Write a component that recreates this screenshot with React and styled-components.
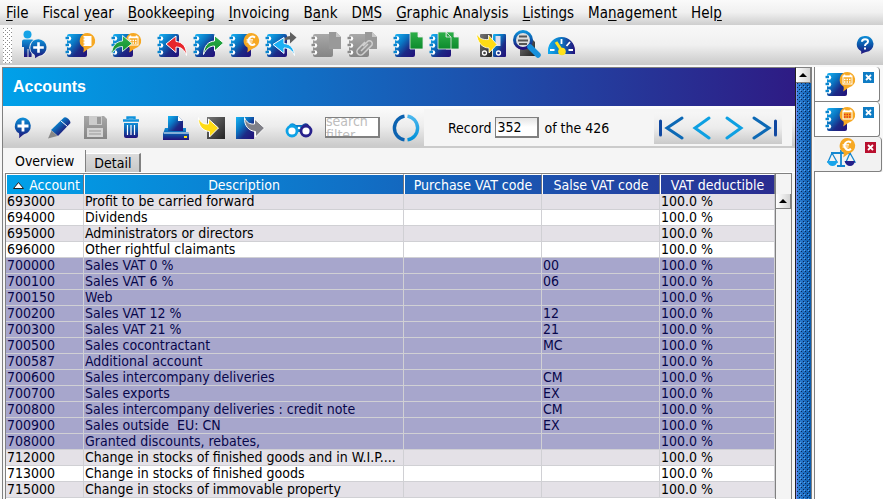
import React, { useState } from 'react'
import styled, { createGlobalStyle } from 'styled-components'

const GlobalStyle = createGlobalStyle`
    * {
        box-sizing: border-box;
    }
    body {
        margin: 0;
        background: #fff;
    }
    button, input, textarea {
        font: inherit;
        color: inherit;
    }
    svg {
        display: block;
        flex: none;
    }
`;

const Page = styled.div`
    height: 100vh;
    overflow: hidden;
    display: flex;
    flex-direction: column;
    background: #f8f8f8;
    color: #000;
    font-family: "DejaVu Sans Condensed", Verdana, sans-serif;
    font-size: 14px;
`;

const Defs = styled.svg`
    position: absolute;
`;

const PlainButton = styled.button`
    border: 0;
    padding: 0;
    background: none;
    display: flex;
    align-items: center;
    justify-content: center;
    cursor: pointer;
`;

/* ---------- menu and main toolbar ---------- */

const MenuBar = styled.nav`
    flex: none;
    height: 25px;
    display: flex;
    align-items: center;
    gap: 14px;
    padding: 1px 6px 0;
    background: linear-gradient(#fafafa, #f0f0f0 50%, #cecece);
`;

const MenuItem = styled(PlainButton)`
    display: block;
    font-size: 15px;
    line-height: 20px;
    white-space: nowrap;
    u {
        text-underline-offset: 2px;
    }
`;

const ToolBar = styled.div`
    flex: none;
    height: 40px;
    display: flex;
    align-items: center;
    gap: 10px;
    padding: 0 9px 0 3px;
    background: linear-gradient(#f8f8f8, #f0f0f0 50%, #c9c9c9);
`;

const Grip = styled.div`
    width: 9px;
    height: 35px;
    margin-right: -5px;
    background:
        linear-gradient(#8a8a8a, #8a8a8a) 0 0 / 0 0,
        conic-gradient(from 270deg at 1px 1px, #8a8a8a 25%, transparent 0) 0 0 / 4px 4px,
        conic-gradient(from 270deg at 1px 1px, #8a8a8a 25%, transparent 0) 2px 2px / 4px 4px,
        #fff;
`;

const Group = styled.div`
    display: flex;
    align-items: center;
`;

const IconButton = styled(PlainButton)`
    width: 36px;
    height: 36px;
`;

const HelpButton = styled(PlainButton)`
    margin-left: auto;
`;

/* ---------- frame ---------- */

const Workspace = styled.div`
    flex: 1;
    min-height: 0;
    display: flex;
    padding: 2px 0 0 2px;
`;

const Panel = styled.main`
    flex: 1;
    min-width: 0;
    display: flex;
    flex-direction: column;
    border: solid #808080;
    border-width: 1px 0 0 1px;
    background: #f5f5f5;
`;

const TitleBar = styled.h1`
    flex: none;
    margin: 0;
    padding: 0 10px;
    font: bold 16px/38px "Liberation Sans", Arial, sans-serif;
    color: #fff;
    background: linear-gradient(to right, #00a1e9, #116fc5 38%, #2340a0 72%, #2e1b84);
`;

const PanelBar = styled.div`
    flex: none;
    height: 42px;
    display: flex;
    align-items: center;
    gap: 10px;
    padding: 3px 3px 0 2px;
    border-bottom: 2px solid #cbcbcb;
    background: linear-gradient(#fcfcfc, #ededed 50%, #cbcbcb);
`;

const SearchGroup = styled(Group)`
    gap: 8px;
    padding-left: 4px;
`;

const SearchBox = styled.label`
    width: 55px;
    height: 21px;
    overflow: hidden;
    border: 1px solid #808080;
    border-width: 1px 2px 2px 1px;
    background: #fff;
`;

const SearchText = styled.textarea`
    display: block;
    width: 100%;
    height: 32px;
    margin-top: -4px;
    padding: 0;
    border: 0;
    outline: none;
    resize: none;
    overflow: hidden;
    background: none;
    line-height: 14px;
    &::placeholder {
        color: #bdbdbd;
    }
`;

const RecordPanel = styled.div`
    flex: 1;
    align-self: stretch;
    display: flex;
    align-items: center;
    gap: 5px;
    margin-left: -10px;
    padding: 0 10px 0 24px;
    background: #f5f5f5;
    white-space: nowrap;
`;

const RecordLabel = styled.label`
    display: flex;
    align-items: center;
    gap: 4px;
`;

const RecordInput = styled.input`
    width: 44px;
    height: 21px;
    padding: 0 1px;
    border: 1px solid #808080;
    border-width: 1px 2px 2px 1px;
    border-radius: 0;
    outline: none;
    background: linear-gradient(#e4e4e4, #fff 50%);
`;

const Navigator = styled.div`
    display: flex;
    margin-left: auto;
    background: linear-gradient(#f6f6f6, #ececec 50%, #cacaca);
`;

const NavButton = styled(PlainButton)`
    width: 32px;
    height: 32px;
`;

/* ---------- tabs ---------- */

const Tabs = styled.div`
    flex: none;
    height: 25px;
    display: flex;
    align-items: flex-end;
    padding: 0 1px;
    border-bottom: 1px solid #fff;
`;

const Tab = styled(PlainButton)`
    height: ${props => props.$active ? "22px" : "19px"};
    padding: 0 ${props => props.$active ? "11px" : "8px"};
    background: ${props => props.$active ? "#f7f7f7" : "linear-gradient(#dcdcdc, #c8c8c8)"};
    border: solid #808080;
    border-width: ${props => props.$active ? "0 1px 0 0" : "1px 2px 0 0"};
    border-top-color: #fff;
`;

/* ---------- table ---------- */

const TableFrame = styled.div`
    flex: 1;
    min-height: 0;
    display: grid;
    grid-template-columns: 1fr 16px;
    margin: 0 3px 0 2px;
    border: solid #808080;
    border-width: 1px 1px 0;
    background: #fff;
`;

const AccountTable = styled.table`
    width: 100%;
    align-self: start;
    table-layout: fixed;
    border-collapse: separate;
    border-spacing: 0;
`;

const HeadRow = styled.tr`
    background: linear-gradient(to right, #00a1e9, #116fc5 46%, #2340a0 84%, #2a2c90);
`;

const HeadCell = styled.th`
    height: 20px;
    padding: 0 3px;
    font-weight: normal;
    line-height: 18px;
    white-space: nowrap;
    color: #fff;
    text-align: ${props => props.$align || "center"};
    border-top: 1px solid #fff;
    border-right: 1px solid #6f7480;
    border-left: 1px solid #fff;
`;

const SortMark = styled.svg`
    display: inline-block;
    margin-right: 5px;
    vertical-align: 1px;
`;

const Row = styled.tr`
    background: ${props => props.$selected ? "#a7a6cc" : props.$shaded ? "#e4e1e7" : "#fff"};
    color: ${props => props.$selected ? "#07074a" : "#000"};
`;

const Cell = styled.td`
    height: 16px;
    padding: 0 1px;
    line-height: 15px;
    white-space: pre;
    overflow: hidden;
    border-right: 1px solid #d0d0d4;
    border-bottom: 1px solid #d0d0d4;
`;

const TableScroll = styled.div`
    padding-top: 20px;
    border-left: 1px solid #808080;
    background: #f4f4f4;
`;

const ArrowButton = styled(PlainButton)`
    width: 100%;
    height: 15px;
    border: solid #808080;
    border-width: 0 1px 1px 0;
    background: linear-gradient(to right, #fff, #d4d4d4);
`;

/* ---------- outer scroll and side tabs ---------- */

const PanelScroll = styled.div`
    flex: none;
    width: 17px;
    display: flex;
    flex-direction: column;
    border: solid #808080;
    border-width: 1px 1px 0 1px;
    border-left-color: #222;
`;

const Thumb = styled.div`
    flex: 1;
    border-left: 1px solid #7c8cf0;
    background:
        conic-gradient(from 270deg at 1px 1px, #0a2450 25%, transparent 0) 0 0 / 4px 4px,
        conic-gradient(from 270deg at 1px 1px, #0a2450 25%, transparent 0) 2px 2px / 4px 4px,
        conic-gradient(from 270deg at 1px 1px, #5aa4ea 25%, transparent 0) 3px 3px / 4px 4px,
        linear-gradient(to right, #3482d8, #0a5cae);
`;

const Side = styled.aside`
    flex: none;
    width: 71px;
    display: flex;
    flex-direction: column;
    padding-left: 2px;
`;

const SideTab = styled.div`
    flex: none;
    height: 35px;
    display: flex;
    align-items: flex-start;
    gap: 6px;
    margin-right: ${props => props.$active ? "1px" : "3px"};
    padding: 1px 0 0 ${props => props.$active ? "13px" : "10px"};
    border: solid #808080;
    border-width: ${props => props.$active ? "0 1px 1px 0" : "0 1px 1px 1px"};
    border-radius: 0 4px 3px 0;
    background: ${props => props.$active ? "#f2f2f2" : "#fff"};
`;

const CloseButton = styled(PlainButton)`
    width: 11px;
    height: 11px;
    margin-top: 4px;
    background: ${props => props.$red ? "#b80f2e" : "#0f7cc4"};
`;

const SideBody = styled.div`
    flex: 1;
    border-left: 1px solid #808080;
    background: #fff;
`;

/* ---------- icons ---------- */

const Svg = ({ size = 32, children }) => (
    <svg width={size} height={size} viewBox={`0 0 ${size} ${size}`} aria-hidden="true">{children}</svg>
)

const Gradients = () => (
    <Defs width="0" height="0" aria-hidden="true">
        <defs>
            <linearGradient id="book" x1="0" y1="0" x2="1" y2="1">
                <stop offset="0" stopColor="#18b4f4" />
                <stop offset="0.35" stopColor="#0a78c4" />
                <stop offset="0.65" stopColor="#1c2a86" />
                <stop offset="1" stopColor="#24107a" />
            </linearGradient>
            <linearGradient id="down" x1="0" y1="0" x2="0" y2="1">
                <stop offset="0" stopColor="#0f8fd8" />
                <stop offset="0.5" stopColor="#0c55a8" />
                <stop offset="1" stopColor="#24107a" />
            </linearGradient>
            <linearGradient id="sky" x1="0" y1="0" x2="0" y2="1">
                <stop offset="0" stopColor="#4cb8ee" />
                <stop offset="1" stopColor="#0090d8" />
            </linearGradient>
            <linearGradient id="across" x1="0" y1="0" x2="1" y2="0">
                <stop offset="0" stopColor="#12aaf0" />
                <stop offset="0.5" stopColor="#0b74c0" />
                <stop offset="1" stopColor="#24107a" />
            </linearGradient>
            <linearGradient id="grey" x1="0" y1="0" x2="0" y2="1">
                <stop offset="0" stopColor="#a8a8a8" />
                <stop offset="1" stopColor="#858585" />
            </linearGradient>
            <linearGradient id="green" x1="0" y1="0" x2="0" y2="1">
                <stop offset="0" stopColor="#2fb04a" />
                <stop offset="1" stopColor="#0c8a2c" />
            </linearGradient>
            <linearGradient id="dark" x1="0" y1="0" x2="1" y2="1">
                <stop offset="0" stopColor="#777" />
                <stop offset="1" stopColor="#222" />
            </linearGradient>
        </defs>
    </Defs>
)

const Book = ({ fill = "url(#book)" }) => (
    <g>
        <rect x="2" y="5" width="20" height="23" rx="2" fill={fill} />
        {[9.5, 16.5, 23.5].map(y => (
            <g key={y}>
                <circle cx="4" cy={y} r="2.2" fill="#fff" />
                <path d={`M0.5 ${y - 0.5}h3.5`} stroke={fill === "url(#book)" ? "#0a86cf" : "#8c8c8c"} strokeWidth="2.4" />
            </g>
        ))}
    </g>
)

const Bubble = () => (
    <path d="M22.500 4a7.800 7.800 0 0 1 2 15.300C22.500 20 21 22 18 23.500c1-2 .800-3.500.500-5A7.800 7.800 0 0 1 22.500 4z" fill="#f6a823" />
)

const Calendar = ({ color = "#fff" }) => (
    <g>
        <rect x="18" y="8" width="9" height="8" fill="none" stroke="#fff" />
        <path d="M18 8.500h9M19.500 6.500v2M25.500 6.500v2" stroke="#fff" strokeWidth="1.500" />
        <path d="M19 11.500h7M19 14h7" stroke={color} strokeWidth="1.500" strokeDasharray="1.500 1" />
    </g>
)

const Euro = () => (
    <g fill="none" stroke="#fff" strokeWidth="2">
        <path d="M26 8.600a4 4 0 1 0 0 6.300" />
        <path d="M17.500 10.800h6.500M17.500 13h6" strokeWidth="1.200" />
    </g>
)

const arrowRight = "M10.500 25.500C11 17 15 12.500 21.500 12V6.500l9 7.500-9 8v-5c-5 0-8.500 3-11 8.500z"
const arrowLeft = "M29.500 26.500C29.500 18 26 13 19 12.500V7L9 15l10 8.500V18c5.500 0 8.500 3 10.500 8.500z"

const PersonIcon = () => (
    <Svg>
        <g transform="translate(2 0)">
            <circle cx="6.500" cy="5.500" r="4" fill="#16a3e6" />
            <path d="M1 12.500q0-2 2-2h8q2 0 2 2v6h-2l-.5 9.500H7.500V20H6.500v8H3V18H1z" fill="url(#down)" />
            <circle cx="17.500" cy="18.500" r="9.200" fill="#eee" />
            <path d="M17.500 10.200a8.300 8.300 0 0 1 1 16.500q-2 .500-4.500 2.500.500-2-.500-3.500A8.300 8.300 0 0 1 17.500 10.200z" fill="url(#down)" />
            <path d="M17.500 13.200v10.600M12.200 18.500h10.600" stroke="#fff" strokeWidth="2.600" />
        </g>
    </Svg>
)
const BookNoteIcon = () => (
    <Svg><Book /><Bubble /><path d="M18.500 7h8v10h-8z" fill="#fff" /><path d="M17.500 9h2M17.500 12h2M17.500 15h2" stroke="#f6a823" /></Svg>
)
const BookImportIcon = () => (
    <Svg>
        <Book /><Bubble /><Calendar />
        <path d="M0.500 25.500C1 17 5 12.500 11.500 12V6.500l9.500 8-9.500 8v-5c-5 0-8 2.500-11 8z" fill="url(#green)" stroke="#fff" strokeWidth=".800" />
    </Svg>
)
const BookArrowIcon = ({ left, fill }) => (
    <Svg><Book /><path d={left ? arrowLeft : arrowRight} fill={fill} stroke="#fff" /></Svg>
)
const BookEuroIcon = () => <Svg><Book /><Bubble /><Euro /></Svg>
const BookSwapIcon = () => (
    <Svg>
        <Book />
        <path d="M17 15c1-5 4-8 8-8V3l6.500 5.500-6.500 6v-4c-4 0-6 1-8 4.500z" fill="#606060" />
        <path d="M29.500 26.500C29 19 25.500 15 19 14.500V8.500L8 15.500 19 24.500V19c5 0 8.500 2.500 10.500 7.500z" fill="#1cb0f4" stroke="#fff" />
    </Svg>
)
const PagePath = ({ x = 0, fill }) => (
    <path transform={`translate(${x} 0)`} d="M17 3h8l5 5v12H17z M25 3v5h5" fill={fill} stroke="#e8e8e8" strokeWidth=".800" />
)
const GreyPageIcon = () => (
    <Svg><Book fill="url(#grey)" /><path d="M18 3h7l5 5v12H18z" fill="#999" /><path d="M25 3v5h5" fill="#c8c8c8" /></Svg>
)
const GreyClipIcon = () => (
    <Svg>
        <Book fill="url(#grey)" /><path d="M18 3h7l5 5v12H18z" fill="#999" />
        <path d="M25 3v5h5" fill="#c8c8c8" />
        <path d="M16 17l5-5a3 3 0 0 1 4 4l-9 9a3.500 3.500 0 0 1-5-5l7-7M14 22l7-7" fill="none" stroke="#d0d0d0" strokeWidth="1.500" />
    </Svg>
)
const GreenPageIcon = () => <Svg><Book /><PagePath fill="url(#green)" /></Svg>
const GreenPagesIcon = () => (
    <Svg><Book /><PagePath fill="url(#green)" /><PagePath x={-8} fill="url(#green)" /></Svg>
)
const BinderIcon = () => (
    <Svg>
        <rect x="5" y="5" width="12" height="23" rx="1" fill="url(#dark)" />
        <rect x="18" y="5" width="13" height="23" rx="1" fill="url(#book)" />
        <path d="M20.500 7h5v10h-5z" fill="#dde" />
        <g fill="none" stroke="#fff" strokeWidth="1.300"><circle cx="9.500" cy="24" r="2" /><circle cx="23.500" cy="24" r="2" /></g>
        <path d="M1.500 4.500c3 5 6 6.500 12 6V6l8.500 9.500-8 8.500v-5C7 19 2 13 1.500 4.500z" fill="#ffdc14" stroke="#fff" strokeWidth=".800" />
    </Svg>
)
const ZoomIcon = () => (
    <Svg>
        <path d="M9 9h11l4 4v14H9z" fill="url(#dark)" />
        <circle cx="12" cy="11" r="8.500" fill="#ddd" stroke="url(#down)" strokeWidth="3" />
        <path d="M8 7.500h8M7 11.500h10M8 15h8" stroke="#555" strokeWidth="2" />
        <path d="M19 18l8 8" stroke="#1690dc" strokeWidth="5.500" strokeLinecap="round" />
    </Svg>
)
const GaugeIcon = () => (
    <Svg>
        <path d="M1 25v-3.500a13.500 13.500 0 0 1 27 0V25z" fill="url(#across)" />
        <path d="M14.500 10v5M23 13l-3.500 4M3 21h4.500M21.500 21H26" stroke="#fff" strokeWidth="1.800" />
        <path d="M9 13l6 9" stroke="#ffe11a" strokeWidth="3" />
        <circle cx="15" cy="22.500" r="3.800" fill="#ffe11a" />
    </Svg>
)
const HelpIcon = () => (
    <Svg size={18}>
        <path d="M9 0a8 8 0 0 1 1 16q-2 .500-5 2 .500-1.500 0-3A8 8 0 0 1 9 0z" fill="url(#down)" />
        <path d="M6 5.800q0-2.500 3-2.500t3 2.200q0 1.500-1.500 2.200T9 10" fill="none" stroke="#fff" strokeWidth="2" />
        <path d="M8 11.500h2v2H8z" fill="#fff" />
    </Svg>
)

const AddIcon = () => (
    <Svg>
        <path d="M16 5.500a8.500 8.500 0 0 1 1 16.800q-1 .500-5 4 .500-3 0-5A8.500 8.500 0 0 1 16 5.500z" fill="url(#down)" />
        <path d="M16 8.500v11M10.500 14h11" stroke="#fff" strokeWidth="2.800" />
    </Svg>
)
const PencilIcon = () => (
    <Svg>
        <path d="M21 5.500q2-1 4.500 1.500t2 4L15 24l-7-6z" fill="url(#book)" />
        <path d="M18 9l6.500 5.500" stroke="#fff" strokeWidth="1" />
        <path d="M8.500 18.500l6 5.500-9.500 2.500z" fill="#888" />
    </Svg>
)
const SaveIcon = () => (
    <Svg>
        <path d="M5 4h20l3 3v20H5z" fill="url(#grey)" />
        <path d="M10 4h13v9H10z" fill="#ccc" /><path d="M18 5h4v7h-4z" fill="#999" />
        <path d="M8 16h16v9H8z" fill="#d4d4d4" /><path d="M10 19h12M10 22h12" stroke="#999" />
    </Svg>
)
const TrashIcon = () => (
    <Svg>
        <path d="M8 8.500h16M12.500 7V5.500h7V7" fill="none" stroke="#1193dc" strokeWidth="2.400" />
        <path d="M9 11h14v13q0 2-2 2H11q-2 0-2-2z" fill="url(#down)" />
        <path d="M12.500 13v10M16 13v10M19.500 13v10" stroke="#fff" strokeWidth="1.200" />
    </Svg>
)
const PrinterIcon = () => (
    <Svg>
        <path d="M7 4h10l5 5v11H7z" fill="url(#book)" /><path d="M17 4v5h5z" fill="#fff" />
        <path d="M4 16h3v3h15v-3h3v4h2q1 0 1 1v7H2v-6z" fill="url(#down)" />
        <path d="M3 21h25" stroke="#fff" strokeWidth="1" /><path d="M23 25h3" stroke="#ffe11a" strokeWidth="2" />
    </Svg>
)
const TransferIcon = ({ out }) => (
    <Svg>
        <rect x={out ? 3 : 10} y="5" width="18" height="22" fill={out ? "url(#book)" : "url(#dark)"} />
        <path transform={out ? "translate(10 0)" : undefined} d="M1.500 5.500c2 5 5 7 10 6.500V7l10 9-9 9v-5.500C6 19 1 14 1.500 5.500z" fill={out ? "#808088" : "#ffdc14"} stroke="#fff" />
    </Svg>
)
const BinocularsIcon = () => (
    <Svg>
        <path d="M4 17l3-5q3-2 6 1h6q3-3 6-1l3 5z" fill="url(#across)" />
        <path d="M11 14h10v6H11z" fill="#0b84cc" />
        <circle cx="9" cy="19" r="5" fill="#fff" stroke="#0ea2e6" strokeWidth="2.800" />
        <circle cx="23" cy="19" r="5" fill="#fff" stroke="#28228c" strokeWidth="2.800" />
        <circle cx="16" cy="16" r="1.300" fill="#fff" />
    </Svg>
)
const RefreshIcon = () => (
    <Svg>
        <path d="M14.500 4.200a12 12 0 0 0 0 23.700" fill="none" stroke="#0c62b0" strokeWidth="3.400" />
        <path d="M17.500 4.200a12 12 0 0 1 0 23.700" fill="none" stroke="url(#sky)" strokeWidth="3.400" />
    </Svg>
)
const ChevronIcon = ({ flip, bar }) => (
    <Svg>
        <g transform={flip ? "matrix(-1 0 0 1 32 0)" : undefined} fill="none" strokeWidth="3" strokeLinecap="round">
            <path d={bar ? "M28 6L13 16l15 10" : "M23 6L9 16l14 10"} stroke={bar ? "#0d69b5" : "#0ea0e2"} />
            {bar && <path d="M6.500 9v14" stroke="#1148a0" />}
        </g>
    </Svg>
)
const BookTabIcon = ({ color }) => <Svg><Book /><Bubble /><Calendar color={color} /></Svg>
const ScalesIcon = () => (
    <Svg>
        <g fill="none" stroke="#1487d0" strokeWidth="1.800">
            <path d="M14 12v16M4 15h20M10 28h8" />
            <path d="M5 15l-4 9h9l-5-9M23 15l-4 9h9l-5-9" strokeWidth="1.300" />
        </g>
        <path d="M0 23h10.500q-1 5-5 5T0 23z" fill="#18a4ea" /><path d="M17.500 23H28q-1 5-5 5t-5.500-5z" fill="#24208a" />
        <g transform="translate(-2 -4)"><Bubble /><Euro /></g>
    </Svg>
)
const UpArrow = () => (
    <svg width="8" height="4" viewBox="0 0 8 4" aria-hidden="true"><path d="M0 4l4-4 4 4z" fill="#000" /></svg>
)
const CrossMark = () => (
    <svg width="7" height="7" viewBox="0 0 7 7" aria-hidden="true"><path d="M1 1l5 5M6 1l-5 5" stroke="#fff" strokeWidth="1.800" /></svg>
)

/* ---------- data ---------- */

// [before, mnemonic, after]
const menus = [
    ["", "F", "ile"], ["Fiscal ", "y", "ear"], ["", "B", "ookkeeping"], ["", "I", "nvoicing"],
    ["B", "a", "nk"], ["D", "M", "S"], ["", "G", "raphic Analysis"], ["", "L", "istings"],
    ["Ma", "n", "agement"], ["Hel", "p", ""],
]

const tools = [
    [["Add relation", <PersonIcon />]],
    [["Journal", <BookNoteIcon />]],
    [["Import calendar", <BookImportIcon />]],
    [
        ["Purchases", <BookArrowIcon left fill="#e8262c" />],
        ["Sales", <BookArrowIcon fill="url(#green)" />],
        ["Financial", <BookEuroIcon />],
        ["Diverse", <BookSwapIcon />],
    ],
    [["Document", <GreyPageIcon />], ["Attachment", <GreyClipIcon />]],
    [["New document", <GreenPageIcon />], ["Copy documents", <GreenPagesIcon />]],
    [["Archive", <BinderIcon />], ["Find", <ZoomIcon />], ["Dashboard", <GaugeIcon />]],
]

const panelTools = [
    [["Add", <AddIcon />], ["Edit", <PencilIcon />], ["Save", <SaveIcon />], ["Delete", <TrashIcon />]],
    [["Print", <PrinterIcon />], ["Import", <TransferIcon />], ["Export", <TransferIcon out />]],
]

// account, description, sales VAT code, selected
const accounts = [
    ["693000", "Profit to be carried forward", ""],
    ["694000", "Dividends", ""],
    ["695000", "Administrators or directors", ""],
    ["696000", "Other rightful claimants", ""],
    ["700000", "Sales VAT 0 %", "00", true],
    ["700100", "Sales VAT 6 %", "06", true],
    ["700150", "Web", "", true],
    ["700200", "Sales VAT 12 %", "12", true],
    ["700300", "Sales VAT 21 %", "21", true],
    ["700500", "Sales cocontractant", "MC", true],
    ["700587", "Additional account", "", true],
    ["700600", "Sales intercompany deliveries", "CM", true],
    ["700700", "Sales exports", "EX", true],
    ["700800", "Sales intercompany deliveries : credit note", "CM", true],
    ["700900", "Sales outside  EU: CN", "EX", true],
    ["708000", "Granted discounts, rebates,", "", true],
    ["712000", "Change in stocks of finished goods and in W.I.P....", ""],
    ["713000", "Change in stocks of finished goods", ""],
    ["715000", "Change in stocks of immovable property", ""],
]

const ToolGroups = ({ groups }) => groups.map((group, i) => (
    <Group key={i}>
        {group.map(([label, icon]) => (
            <IconButton key={label} type="button" aria-label={label}>{icon}</IconButton>
        ))}
    </Group>
))

const App = () => {
    const [tab, setTab] = useState("Overview")
    const [record, setRecord] = useState("352")
    const [filter, setFilter] = useState("")

    return (
        <Page>
            <GlobalStyle />
            <Gradients />
            <MenuBar>
                {menus.map(([before, key, after]) => (
                    <MenuItem key={before + key + after} type="button">{before}<u>{key}</u>{after}</MenuItem>
                ))}
            </MenuBar>
            <ToolBar>
                <Grip />
                <ToolGroups groups={tools} />
                <HelpButton type="button" aria-label="Help"><HelpIcon /></HelpButton>
            </ToolBar>
            <Workspace>
                <Panel>
                    <TitleBar>Accounts</TitleBar>
                    <PanelBar>
                        <ToolGroups groups={panelTools} />
                        <SearchGroup>
                            <IconButton type="button" aria-label="Search"><BinocularsIcon /></IconButton>
                            <SearchBox>
                                <SearchText aria-label="Search filter" placeholder="search filter" value={filter} onChange={e => setFilter(e.target.value)} />
                            </SearchBox>
                            <IconButton type="button" aria-label="Refresh"><RefreshIcon /></IconButton>
                        </SearchGroup>
                        <RecordPanel>
                            <RecordLabel>
                                Record
                                <RecordInput value={record} onChange={e => setRecord(e.target.value)} />
                            </RecordLabel>
                            <span>of the 426</span>
                            <Navigator>
                                <NavButton type="button" aria-label="First"><ChevronIcon bar /></NavButton>
                                <NavButton type="button" aria-label="Previous"><ChevronIcon /></NavButton>
                                <NavButton type="button" aria-label="Next"><ChevronIcon flip /></NavButton>
                                <NavButton type="button" aria-label="Last"><ChevronIcon flip bar /></NavButton>
                            </Navigator>
                        </RecordPanel>
                    </PanelBar>
                    <Tabs role="tablist">
                        {["Overview", "Detail"].map(name => (
                            <Tab key={name} type="button" role="tab" aria-selected={tab === name} $active={tab === name} onClick={() => setTab(name)}>{name}</Tab>
                        ))}
                    </Tabs>
                    <TableFrame>
                        <AccountTable>
                            <colgroup>
                                <col width="78" />
                                <col />
                                <col width="138" />
                                <col width="118" />
                                <col width="115" />
                            </colgroup>
                            <thead>
                                <HeadRow>
                                    <HeadCell $align="right">
                                        <SortMark width="11" height="7" viewBox="0 0 11 7" aria-hidden="true">
                                            <path d="M0.500 6.500l5-6 5 6z" fill="#fff" stroke="#222" />
                                        </SortMark>
                                        Account
                                    </HeadCell>
                                    <HeadCell>Description</HeadCell>
                                    <HeadCell>Purchase VAT code</HeadCell>
                                    <HeadCell>Salse VAT code</HeadCell>
                                    <HeadCell>VAT deductible</HeadCell>
                                </HeadRow>
                            </thead>
                            <tbody>
                                {accounts.map(([number, description, code, selected], i) => (
                                    <Row key={number} $selected={selected} $shaded={i % 2 === 0}>
                                        <Cell>{number}</Cell>
                                        <Cell>{description}</Cell>
                                        <Cell />
                                        <Cell>{code}</Cell>
                                        <Cell>100.0 %</Cell>
                                    </Row>
                                ))}
                            </tbody>
                        </AccountTable>
                        <TableScroll>
                            <ArrowButton type="button" aria-label="Scroll table up"><UpArrow /></ArrowButton>
                        </TableScroll>
                    </TableFrame>
                </Panel>
                <PanelScroll>
                    <ArrowButton type="button" aria-label="Scroll up"><UpArrow /></ArrowButton>
                    <Thumb />
                </PanelScroll>
                <Side>
                    <SideTab>
                        <BookTabIcon />
                        <CloseButton type="button" aria-label="Close"><CrossMark /></CloseButton>
                    </SideTab>
                    <SideTab>
                        <BookTabIcon color="#e0301e" />
                        <CloseButton type="button" aria-label="Close"><CrossMark /></CloseButton>
                    </SideTab>
                    <SideTab $active>
                        <ScalesIcon />
                        <CloseButton $red type="button" aria-label="Close"><CrossMark /></CloseButton>
                    </SideTab>
                    <SideBody />
                </Side>
            </Workspace>
        </Page>
    )
}

export default App
